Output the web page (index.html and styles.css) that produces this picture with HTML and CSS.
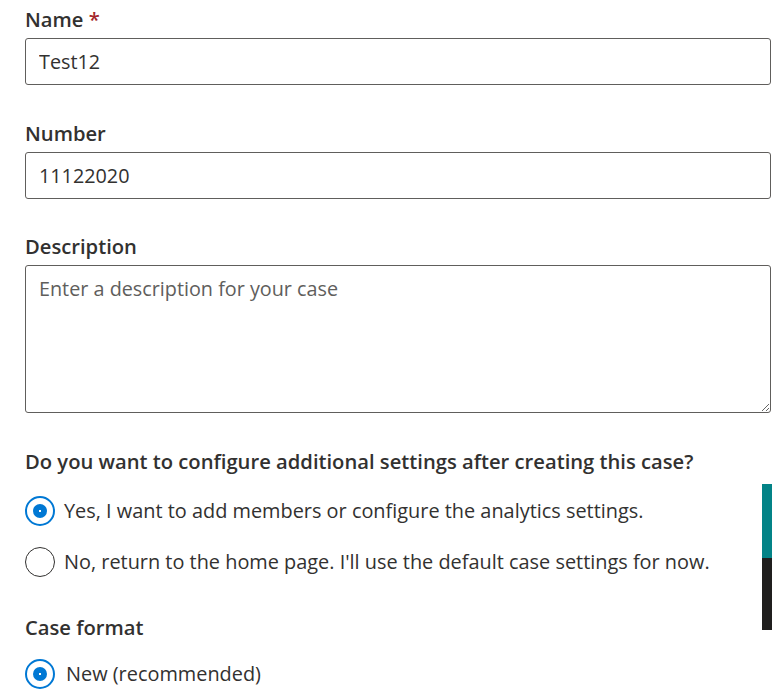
FILE: index.html
```html
<!DOCTYPE html>
<html lang="en">
<head>
<meta charset="utf-8">
<title>Create case</title>
<link rel="stylesheet" href="styles.css">
</head>
<body>
<form class="form">
  <div class="field">
    <label class="label" for="name">Name <span class="req">*</span></label>
    <input class="input" id="name" type="text" value="Test12">
  </div>
  <div class="field">
    <label class="label" for="number">Number</label>
    <input class="input" id="number" type="text" value="11122020">
  </div>
  <div class="field">
    <label class="label" for="desc">Description</label>
    <textarea class="textarea" id="desc" placeholder="Enter a description for your case"></textarea>
  </div>
  <div class="field">
    <div class="label">Do you want to configure additional settings after creating this case?</div>
    <div class="radios">
      <label class="radio"><input type="radio" name="cfg" checked><span class="dot"></span><span class="rtext">Yes, I want to add members or configure the analytics settings.</span></label>
      <label class="radio"><input type="radio" name="cfg"><span class="dot"></span><span class="rtext">No, return to the home page. I'll use the default case settings for now.</span></label>
    </div>
  </div>
  <div class="field field-format">
    <div class="label">Case format</div>
    <div class="radios radios-tight">
      <label class="radio"><input type="radio" name="fmt" checked><span class="dot"></span><span class="rtext rtext-new">New (recommended)</span></label>
    </div>
  </div>
</form>
<div class="scrollbar"><div class="thumb-teal"></div><div class="thumb-dark"></div></div>
</body>
</html>
```
FILE: styles.css
```css
html, body {
  margin: 0;
  padding: 0;
  background: #ffffff;
}
body {
  font-family: "Open Sans", "Noto Sans", "Liberation Sans", sans-serif;
  color: #323130;
  overflow: hidden;
}
.form {
  padding: 5px 1px 0 25px;
  display: flex;
  flex-direction: column;
  gap: 33.5px;
}
.field {
  display: flex;
  flex-direction: column;
}
.field-format {
  margin-top: 2.5px;
}
.label {
  font-size: 20.2px;
  line-height: 28px;
  font-weight: 600;
  margin-bottom: 5px;
  color: #323130;
}
.req {
  color: #a4262c;
}
.input, .textarea {
  box-sizing: border-box;
  width: 100%;
  height: 47px;
  border: 1px solid #605e5c;
  border-radius: 3px;
  padding: 0 13px;
  font-family: inherit;
  font-size: 19.8px;
  color: #323130;
  background: #fff;
  outline: none;
}
.textarea {
  height: 148px;
  padding: 9px 13px;
  resize: vertical;
  line-height: 28px;
}
.textarea::placeholder {
  color: #605e5c;
}
.radios {
  display: flex;
  flex-direction: column;
  gap: 21px;
  margin-top: 16px;
}
.radios-tight {
  margin-top: 13px;
}
.radio {
  display: flex;
  align-items: center;
  gap: 9px;
  height: 30px;
  font-size: 19.9px;
}
.radio input {
  display: none;
}
.dot {
  box-sizing: border-box;
  width: 30px;
  height: 30px;
  flex: none;
  border: 1px solid #323130;
  border-radius: 50%;
  position: relative;
}
.radio input:checked + .dot {
  border: 2px solid #0078d4;
}
.radio input:checked + .dot::after {
  content: "";
  position: absolute;
  left: 50%;
  top: 50%;
  width: 14px;
  height: 14px;
  margin: -7px 0 0 -7px;
  border-radius: 50%;
  background: radial-gradient(circle, #ffffff 0 1px, #0078d4 1.5px);
}
.rtext-new {
  margin-left: 2px;
}
.scrollbar {
  position: absolute;
  left: 762px;
  top: 484px;
  width: 10px;
}
.thumb-teal {
  height: 74px;
  background: #038387;
}
.thumb-dark {
  height: 72px;
  background: #201f1e;
}
```
